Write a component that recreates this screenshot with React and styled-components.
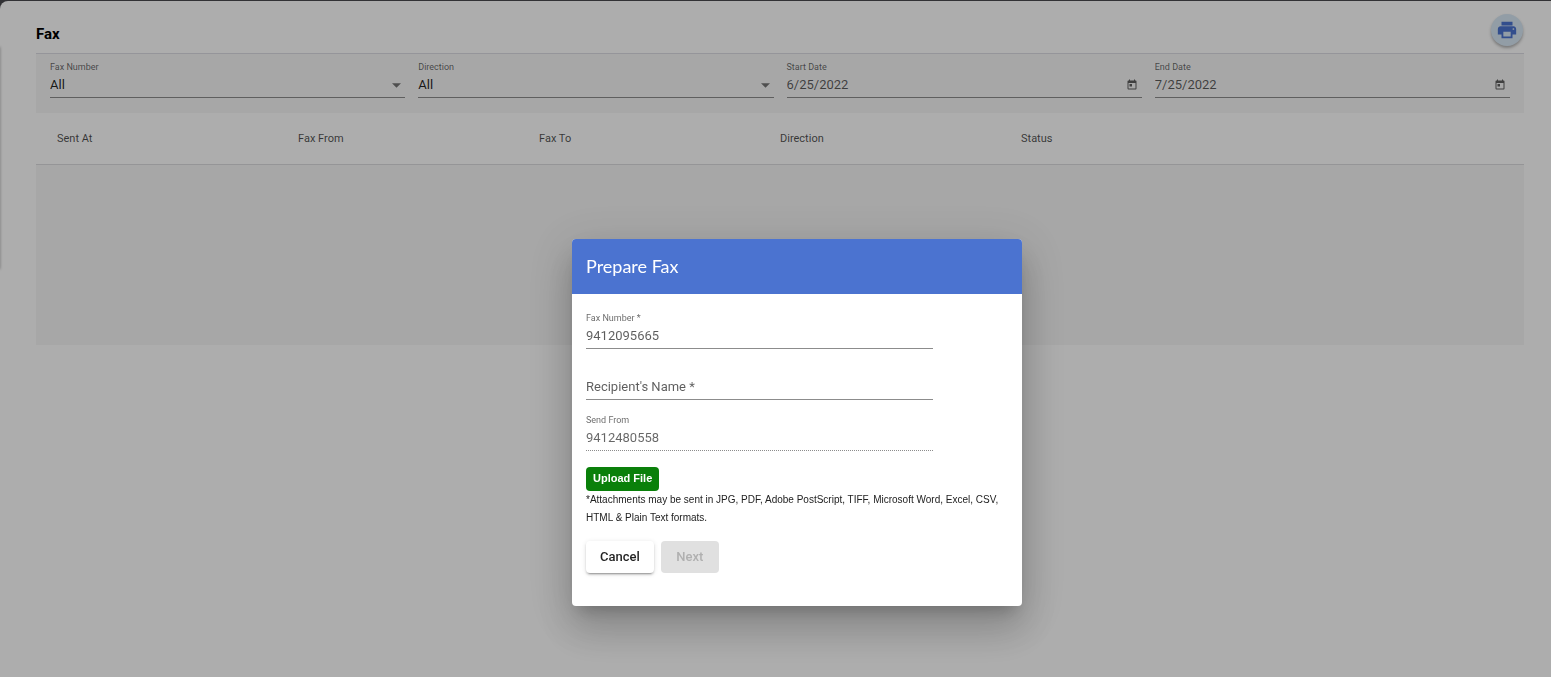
import React, {useState} from 'react'
import styled, {createGlobalStyle} from 'styled-components'
import {MdPrint, MdToday} from 'react-icons/md'

const columns = ['Sent At', 'Fax From', 'Fax To', 'Direction', 'Status', '']

function SelectField({id, label}) {
    return (
        <Field>
            <FieldLabel htmlFor={id}>{label}</FieldLabel>
            <Control>
                <Select id={id} defaultValue="All">
                    <option>All</option>
                </Select>
                <Arrow viewBox="0 0 10 5" aria-hidden="true"><path d="M0 0h10L5 5z" /></Arrow>
            </Control>
        </Field>
    )
}

function DateField({id, label, value}) {
    return (
        <Field>
            <FieldLabel htmlFor={id}>{label}</FieldLabel>
            <Control>
                <Input id={id} defaultValue={value} />
                <CalendarButton type="button" aria-label={`Open ${label} calendar`}><MdToday size={12} /></CalendarButton>
            </Control>
        </Field>
    )
}

function PrepareFax() {

    const [faxNumber, setFaxNumber] = useState('9412095665')
    const [recipient, setRecipient] = useState('')

    return (
        <Dialog role="dialog" aria-modal="true" aria-labelledby="dialog-title">
            <DialogTitle id="dialog-title">Prepare Fax</DialogTitle>
            <DialogForm onSubmit={(e) => e.preventDefault()}>
                <DialogFields>
                    <Field>
                        <FieldLabel htmlFor="to-number">Fax Number *</FieldLabel>
                        <Control>
                            <Input id="to-number" value={faxNumber} onChange={(e) => setFaxNumber(e.target.value)} />
                        </Control>
                    </Field>
                    <Field $unlabelled>
                        <Control>
                            <Input
                                aria-label="Recipient's Name"
                                placeholder="Recipient's Name *"
                                value={recipient}
                                onChange={(e) => setRecipient(e.target.value)}
                            />
                        </Control>
                    </Field>
                    <Field>
                        <FieldLabel htmlFor="from-number">Send From</FieldLabel>
                        <Control $disabled>
                            <Input id="from-number" defaultValue="9412480558" disabled />
                        </Control>
                    </Field>
                </DialogFields>
                <UploadButton type="button">Upload File</UploadButton>
                <Note>*Attachments may be sent in JPG, PDF, Adobe PostScript, TIFF, Microsoft Word, Excel, CSV, HTML &amp; Plain Text formats.</Note>
                <Actions>
                    <ActionButton type="button">Cancel</ActionButton>
                    <ActionButton type="submit" disabled={!faxNumber || !recipient}>Next</ActionButton>
                </Actions>
            </DialogForm>
        </Dialog>
    )
}

function App() {
    return (
        <>
            <GlobalStyle />
            <Page>
                <MenuShadow />
                <Header>
                    <Title>Fax</Title>
                    <PrintButton type="button" aria-label="Print"><MdPrint size={22} /></PrintButton>
                </Header>
                <Filters>
                    <SelectField id="fax-number" label="Fax Number" />
                    <SelectField id="direction" label="Direction" />
                    <DateField id="start-date" label="Start Date" value="6/25/2022" />
                    <DateField id="end-date" label="End Date" value="7/25/2022" />
                </Filters>
                <TableHead>
                    <Table>
                        <thead>
                            <tr>
                                {columns.map((column, index) => (
                                    column ? <th key={index} scope="col">{column}</th> : <td key={index} />
                                ))}
                            </tr>
                        </thead>
                    </Table>
                </TableHead>
                <EmptyRows />
            </Page>
            <Backdrop>
                <PrepareFax />
            </Backdrop>
        </>
    )
}

const GlobalStyle = createGlobalStyle`
    * {
        box-sizing: border-box;
    }
    body {
        margin: 0;
        padding-top: 1px;
        background: #4a4a4f;
        font-family: Roboto, sans-serif;
    }
    button, input, select {
        font-family: inherit;
    }
`

const Page = styled.main`
    position: relative;
    min-height: calc(100vh - 1px);
    padding: 0 27px 0 36px;
    background: #fff;
    border-top-left-radius: 8px;
`

const MenuShadow = styled.div`
    position: absolute;
    left: -2px;
    top: 46px;
    width: 2px;
    height: 222px;
    box-shadow: 0 0 3px rgba(0, 0, 0, 0.4);
`

const Header = styled.header`
    display: flex;
    align-items: center;
    justify-content: space-between;
    height: 53px;
    padding: 5px 1px 0 0;
    border-bottom: 1px solid #dcdce4;
`

const Title = styled.h1`
    margin: 0;
    padding-top: 8px;
    font-size: 15px;
    line-height: 18px;
    font-weight: 700;
    color: #000;
`

const PrintButton = styled.button`
    display: flex;
    align-items: center;
    justify-content: center;
    width: 32px;
    height: 32px;
    padding: 0;
    border: 0;
    border-radius: 50%;
    background: #d8e8f5;
    color: #4b73d0;
    box-shadow: 0 2px 3px rgba(0, 0, 0, 0.3);
    cursor: pointer;
`

const Filters = styled.section`
    display: grid;
    grid-template-columns: repeat(4, 1fr);
    gap: 13px;
    padding: 7px 14px 15px;
    background: #f7f7f7;
`

const Field = styled.div`
    min-width: 0;
    padding-top: ${(props) => props.$unlabelled ? '12px' : '0'};
`

const FieldLabel = styled.label`
    display: block;
    font-size: 9px;
    line-height: 12px;
    color: rgba(0, 0, 0, 0.6);
`

const Control = styled.div`
    display: flex;
    align-items: center;
    height: 25px;
    border-bottom: 1px ${(props) => props.$disabled ? 'dotted' : 'solid'} #8c8c8c;
`

const Input = styled.input`
    flex: 1;
    min-width: 0;
    padding: 0;
    border: 0;
    outline: 0;
    background: transparent;
    font-size: 13px;
    line-height: 18px;
    color: rgba(0, 0, 0, 0.64);
    &::placeholder{
        color: rgba(0, 0, 0, 0.64);
    }
    &:disabled{
        color: rgba(0, 0, 0, 0.6);
    }
`

const Select = styled.select`
    flex: 1;
    min-width: 0;
    padding: 0;
    border: 0;
    outline: 0;
    appearance: none;
    background: transparent;
    font-size: 13px;
    line-height: 18px;
    color: rgba(0, 0, 0, 0.87);
`

const Arrow = styled.svg`
    width: 9px;
    height: 5px;
    margin-right: 4px;
    fill: #757575;
    pointer-events: none;
`

const CalendarButton = styled.button`
    display: flex;
    padding: 0;
    margin-right: 4px;
    border: 0;
    background: transparent;
    color: #5f5f5f;
    cursor: pointer;
`

const TableHead = styled.div`
    padding: 0 21px;
    border-bottom: 1px solid #dcdcdf;
`

const Table = styled.table`
    width: 100%;
    table-layout: fixed;
    border-collapse: collapse;
    th {
        height: 51px;
        padding: 0;
        text-align: left;
        font-size: 11px;
        font-weight: 400;
        color: rgba(0, 0, 0, 0.7);
    }
`

const EmptyRows = styled.div`
    height: 180px;
    background: #f7f7f7;
`

const Backdrop = styled.div`
    position: fixed;
    inset: 0;
    display: flex;
    align-items: center;
    justify-content: center;
    padding: 168px 0 0 43px;
    background: rgba(0, 0, 0, 0.32);
`

const Dialog = styled.section`
    width: 450px;
    max-width: 80vw;
    border-radius: 4px;
    overflow: hidden;
    background: #fff;
    box-shadow: 0 11px 15px -7px rgba(0, 0, 0, 0.2), 0 24px 38px 3px rgba(0, 0, 0, 0.14), 0 9px 46px 8px rgba(0, 0, 0, 0.12);
`

const DialogTitle = styled.h2`
    margin: 0;
    padding: 15px 14px 16px;
    font-family: Lato, sans-serif;
    font-size: 18px;
    line-height: 24px;
    font-weight: 400;
    color: #fff;
    background: #4b73d0;
`

const DialogForm = styled.form`
    padding: 18px 14px 33px;
`

const DialogFields = styled.div`
    display: flex;
    flex-direction: column;
    gap: 14px;
    width: 347px;
    max-width: 100%;
`

const UploadButton = styled.button`
    display: block;
    height: 24px;
    margin-top: 16px;
    padding: 0 7px 2px;
    border: 0;
    border-radius: 4px;
    background: #0a800a;
    color: #fff;
    font-family: "Liberation Sans", sans-serif;
    font-size: 11px;
    font-weight: 700;
    cursor: pointer;
`

const Note = styled.p`
    margin: 0;
    font-family: "Liberation Sans", sans-serif;
    font-size: 10px;
    line-height: 18px;
    color: #222;
`

const Actions = styled.div`
    display: flex;
    gap: 7px;
    margin-top: 14px;
`

const ActionButton = styled.button`
    min-width: 58px;
    height: 32px;
    padding: 0 14px 1px;
    border: 0;
    border-radius: 4px;
    background: #fff;
    color: rgba(0, 0, 0, 0.87);
    font-size: 13px;
    font-weight: 500;
    box-shadow: 0 3px 1px -2px rgba(0, 0, 0, 0.2), 0 2px 2px rgba(0, 0, 0, 0.14), 0 1px 5px rgba(0, 0, 0, 0.12);
    cursor: pointer;
    &:disabled{
        background: #e0e0e0;
        color: #b0b0b0;
        box-shadow: none;
        cursor: default;
    }
`

export default App
